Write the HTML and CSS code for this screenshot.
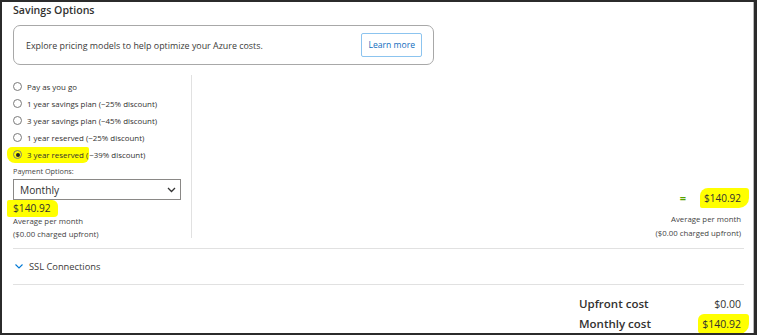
FILE: index.html
```html
<!DOCTYPE html>
<html lang="en">
<head>
    <meta charset="UTF-8">
    <meta name="viewport" content="width=device-width, initial-scale=1.0">
    <title>Savings Options</title>
    <link rel="stylesheet" href="styles.css">
</head>
<body>
    <div class="frame">
        <div class="panel">
            <h2 class="title">Savings Options</h2>

            <!-- Info banner -->
            <div class="info-box">
                <span class="info-text">Explore pricing models to help optimize your Azure costs.</span>
                <button class="btn-learn">Learn more</button>
            </div>

            <!-- Options -->
            <div class="options">
                <div class="options-left">
                    <div class="radio-row"><span class="radio"></span>Pay as you go</div>
                    <div class="radio-row"><span class="radio"></span>1 year savings plan (~25% discount)</div>
                    <div class="radio-row"><span class="radio"></span>3 year savings plan (~45% discount)</div>
                    <div class="radio-row"><span class="radio"></span>1 year reserved (~25% discount)</div>
                    <div class="radio-row"><mark class="hl hl-radio"><span class="radio checked"></span>3 year reserved (</mark>~39% discount)</div>

                    <div class="pay-label">Payment Options:</div>
                    <div class="select">
                        <span>Monthly</span>
                        <svg class="chev" width="9" height="6" viewBox="0 0 9 6"><path d="M1 1 L4.5 4.5 L8 1" fill="none" stroke="#333" stroke-width="1.3"/></svg>
                    </div>
                    <div class="price-left"><mark class="hl hl-left">$140.92</mark></div>
                    <div class="note">Average per month</div>
                    <div class="note">($0.00 charged upfront)</div>
                </div>

                <div class="options-right">
                    <div class="total"><span class="eq">=</span><mark class="hl hl-right">$140.92</mark></div>
                    <div class="note">Average per month</div>
                    <div class="note">($0.00 charged upfront)</div>
                </div>
            </div>

            <!-- SSL -->
            <div class="accordion">
                <svg class="acc-chev" width="8" height="5" viewBox="0 0 8 5"><path d="M0.5 0.5 L4 4 L7.5 0.5" fill="none" stroke="#0078d4" stroke-width="1.1"/></svg>
                <span>SSL Connections</span>
            </div>

            <!-- Summary -->
            <div class="summary">
                <div class="summary-grid">
                    <span>Upfront cost</span><span class="val">$0.00</span>
                    <span>Monthly cost</span><span class="val"><mark class="hl hl-bottom">$140.92</mark></span>
                </div>
            </div>
        </div>
    </div>
</body>
</html>
```

FILE: styles.css
```css
body {
    margin: 0;
    padding: 0;
    font-family: "Open Sans", "Noto Sans", sans-serif;
    color: #323130;
    background: #fff;
}

.frame {
    width: 757px;
    height: 335px;
    box-sizing: border-box;
    border: 2px solid #2b2b2b;
    border-right: 3px solid #2b2b2b;
    overflow: hidden;
}

.panel {
    height: 100%;
    box-sizing: border-box;
    padding: 0 9px 0 11px;
    border-right: 1px solid #b8b8b8;
}

.title {
    margin: 0;
    font-size: 10.6px;
    line-height: 16px;
    font-weight: 600;
    color: #323130;
}

.info-box {
    margin-top: 7px;
    width: 421px;
    height: 40px;
    box-sizing: border-box;
    border: 1px solid #a8a8a8;
    border-radius: 7px;
    display: flex;
    align-items: center;
    justify-content: space-between;
    padding: 0 11px 0 12px;
}

.info-text {
    font-size: 8.9px;
    color: #3b3a39;
}

.btn-learn {
    height: 24px;
    padding: 0 6px;
    background: #fff;
    border: 1px solid #8cc4ef;
    border-radius: 2px;
    color: #0f6cbd;
    font-family: inherit;
    font-size: 8.6px;
}

.options {
    margin-top: 10px;
    display: flex;
    height: 173px;
}

.options-left {
    width: 178px;
    border-right: 1px solid #e1e1e1;
    padding-top: 3px;
    margin-bottom: 10px;
}

.radio-row {
    height: 17px;
    display: flex;
    align-items: center;
    font-size: 7.9px;
    color: #323130;
}

.radio {
    width: 7px;
    height: 7px;
    border: 1px solid #7a7a7a;
    border-radius: 50%;
    margin-right: 5px;
    flex-shrink: 0;
    position: relative;
}

.radio.checked::after {
    content: "";
    position: absolute;
    left: 1.5px;
    top: 1.5px;
    width: 4px;
    height: 4px;
    border-radius: 50%;
    background: #222;
}

.hl {
    background: #ffff00;
    color: inherit;
}

.hl-radio {
    display: inline-flex;
    align-items: center;
    margin-left: -6px;
    padding: 3px 1px 3px 6px;
    border-radius: 5px 2px 6px 8px;
}

.pay-label {
    margin-top: 2px;
    font-size: 7.3px;
    line-height: 12px;
    color: #444;
}

.select {
    margin-top: 2px;
    width: 168px;
    height: 21px;
    box-sizing: border-box;
    border: 1px solid #8a8886;
    display: flex;
    align-items: center;
    justify-content: space-between;
    padding: 0 4px 0 6px;
    font-size: 10.2px;
    color: #323130;
}

.price-left {
    margin-top: 1px;
    font-size: 10.2px;
    line-height: 14px;
}

.hl-left {
    margin-left: -6px;
    padding: 1px 7px 2px 6px;
    border-radius: 2px 6px 4px 2px;
}

.note {
    font-size: 7.8px;
    line-height: 13px;
    color: #444;
}

.options-right {
    flex: 1;
    display: flex;
    flex-direction: column;
    align-items: flex-end;
    justify-content: flex-end;
    padding-right: 3px;
    padding-bottom: 8px;
}

.options-right .note {
    line-height: 14px;
}

.total {
    font-size: 10px;
    line-height: 14px;
    margin-bottom: 4px;
    display: flex;
    align-items: center;
}

.eq {
    color: #57a300;
    font-weight: 700;
    font-size: 11px;
    margin-right: 14px;
}

.hl-right {
    padding: 3px 8px 3px 4px;
    margin-right: -8px;
    border-radius: 8px 3px 10px 2px;
}

.accordion {
    border-top: 1px solid #e1e1e1;
    border-bottom: 1px solid #e1e1e1;
    height: 35px;
    display: flex;
    align-items: center;
    font-size: 9.3px;
    color: #3b3a39;
}

.acc-chev {
    margin: 0 6px 0 2px;
}

.summary {
    display: flex;
    justify-content: flex-end;
    padding-top: 9px;
    padding-right: 3px;
}

.summary-grid {
    width: 162px;
    display: grid;
    grid-template-columns: 1fr auto;
    font-size: 11.5px;
    line-height: 20px;
    font-weight: 600;
    color: #323130;
}

.val {
    text-align: right;
    font-weight: 400;
    font-size: 10.5px;
}

.hl-bottom {
    padding: 3px 8px 3px 4px;
    margin-right: -8px;
    border-radius: 6px 3px 10px 4px;
}
```
